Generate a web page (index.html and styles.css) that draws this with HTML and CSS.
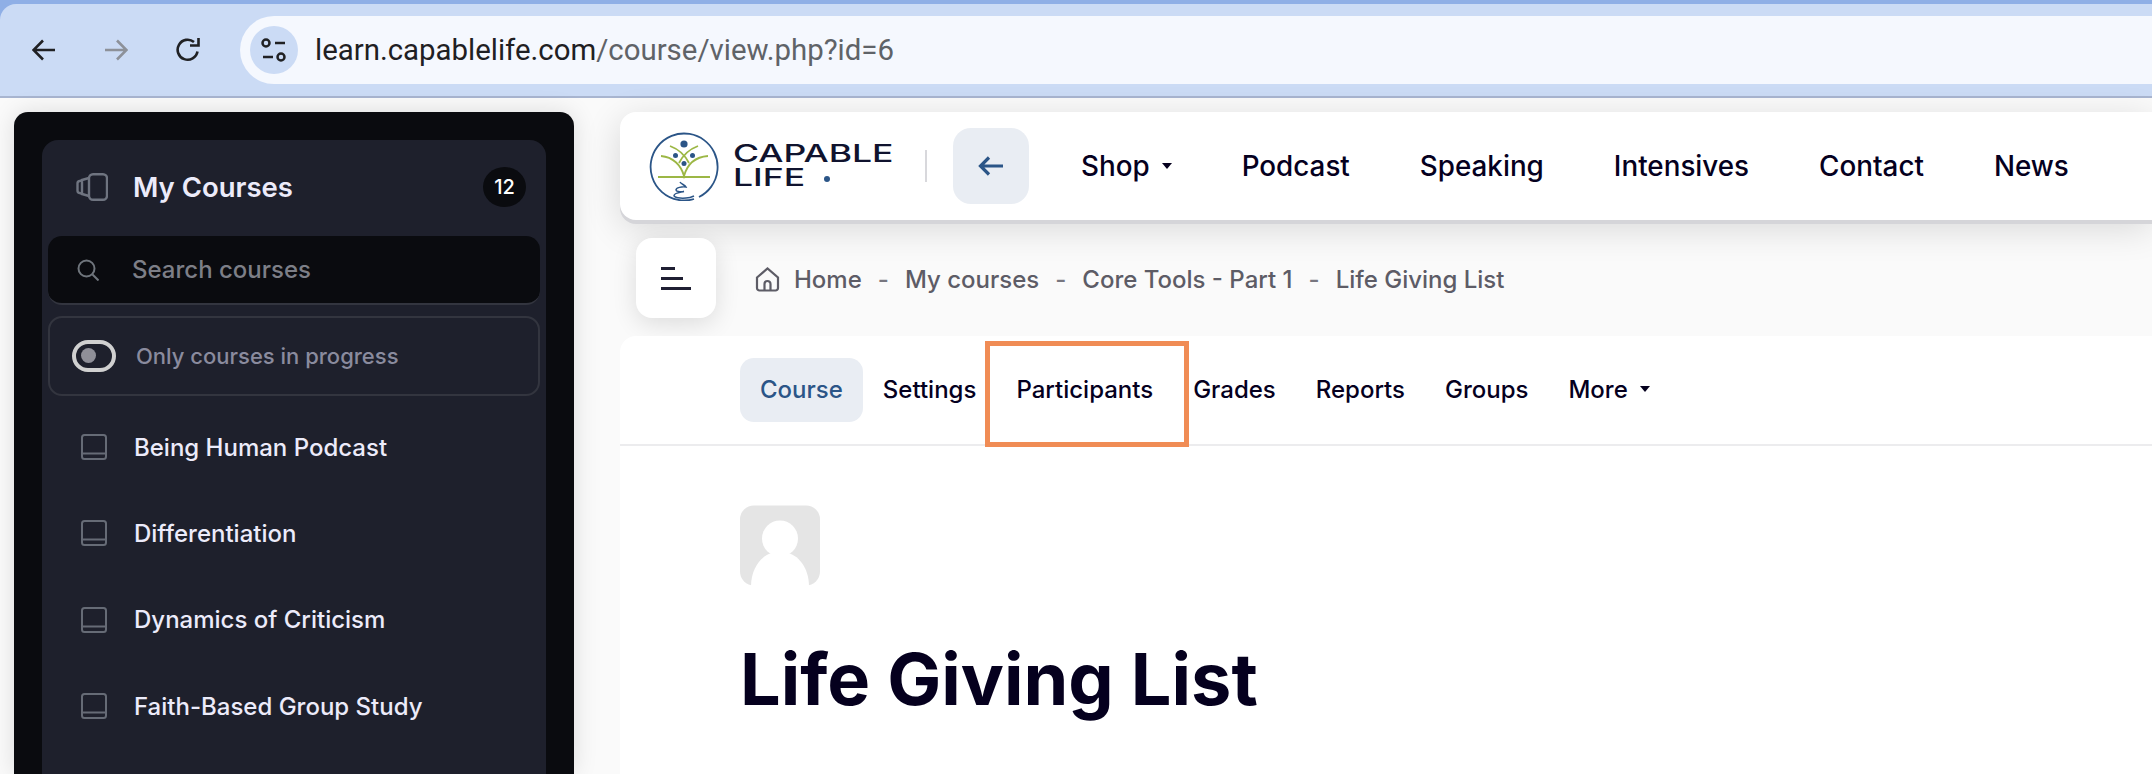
FILE: index.html
```html
<!DOCTYPE html>
<html lang="en">
<head>
    <meta charset="UTF-8">
    <meta name="viewport" content="width=device-width, initial-scale=1.0">
    <title>Life Giving List</title>
    <link rel="stylesheet" href="styles.css">
</head>
<body>
    <div class="browser-bar">
        <div class="toolbar">
            <svg class="tool-icon" viewBox="0 0 24 24"><path d="M23 12H2M11 2.500 1.500 12l9.500 9.500" fill="none" stroke="#202124" stroke-width="2.600"/></svg>
            <svg class="tool-icon" viewBox="0 0 24 24"><path d="M1 12h21M13 2.500 22.500 12 13 21.500" fill="none" stroke="#8d9199" stroke-width="2.600"/></svg>
            <svg class="tool-icon" viewBox="0 0 24 24"><path d="M21.500 13.500A10 10 0 1 1 18 4" fill="none" stroke="#202124" stroke-width="2.600"/><path d="M14 7.500h8.500V0" fill="none" stroke="#202124" stroke-width="2.600"/></svg>
            <div class="address-bar">
                <span class="site-icon">
                    <svg viewBox="0 0 48 48" width="48" height="48"><circle cx="16" cy="17" r="3.500" fill="none" stroke="#202124" stroke-width="2.500"/><path d="M25 17h10M13 31h10" stroke="#202124" stroke-width="2.500"/><circle cx="31" cy="31" r="3.500" fill="none" stroke="#202124" stroke-width="2.500"/></svg>
                </span>
                <span class="url">learn.capablelife.com<span class="url-path">/course/view.php?id=6</span></span>
            </div>
        </div>
    </div>

    <div class="page">
        <aside class="sidebar">
            <div class="sidebar-inner">
                <div class="courses-head">
                    <svg class="courses-icon" viewBox="0 0 32 28"><rect x="13" y="1.200" width="18" height="25.600" rx="4" fill="none" stroke="#6f7480" stroke-width="2.400"/><path d="M13 5 6 7v14l7 2M6 7 3.500 8A2.500 2.500 0 0 0 1.500 10.500v7A2.500 2.500 0 0 0 3.500 20L6 21" fill="none" stroke="#6f7480" stroke-width="2.400"/></svg>
                    <span class="courses-title">My Courses</span>
                    <span class="courses-count">12</span>
                </div>
                <div class="search-box">
                    <svg class="search-icon" viewBox="0 0 22 22"><circle cx="9.500" cy="9.500" r="8" fill="none" stroke="#6f757c" stroke-width="2"/><path d="m15.500 15.500 6 6" stroke="#6f757c" stroke-width="2"/></svg>
                    <span>Search courses</span>
                </div>
                <div class="progress-filter">
                    <span class="toggle"><span class="toggle-dot"></span></span>
                    <span>Only courses in progress</span>
                </div>
                <ul class="course-list">
                    <li class="course-item">
                        <svg class="book-icon" viewBox="0 0 26 26"><rect x="1" y="1" width="24" height="24" rx="2.500" fill="none" stroke="#666b76" stroke-width="2"/><path d="M1 19.500h24" stroke="#666b76" stroke-width="2"/></svg>
                        Being Human Podcast
                    </li>
                    <li class="course-item">
                        <svg class="book-icon" viewBox="0 0 26 26"><rect x="1" y="1" width="24" height="24" rx="2.500" fill="none" stroke="#666b76" stroke-width="2"/><path d="M1 19.500h24" stroke="#666b76" stroke-width="2"/></svg>
                        Differentiation
                    </li>
                    <li class="course-item">
                        <svg class="book-icon" viewBox="0 0 26 26"><rect x="1" y="1" width="24" height="24" rx="2.500" fill="none" stroke="#666b76" stroke-width="2"/><path d="M1 19.500h24" stroke="#666b76" stroke-width="2"/></svg>
                        Dynamics of Criticism
                    </li>
                    <li class="course-item">
                        <svg class="book-icon" viewBox="0 0 26 26"><rect x="1" y="1" width="24" height="24" rx="2.500" fill="none" stroke="#666b76" stroke-width="2"/><path d="M1 19.500h24" stroke="#666b76" stroke-width="2"/></svg>
                        Faith-Based Group Study
                    </li>
                </ul>
            </div>
        </aside>

        <main class="content">
            <header class="site-header">
                <svg class="logo-mark" viewBox="0 0 70 70">
                    <path d="M50 66A33.500 33.500 0 1 0 45 68" fill="none" stroke="#2b5587" stroke-width="1.800"/>
                    <circle cx="35" cy="13" r="3.600" fill="#2b5587"/>
                    <circle cx="26.500" cy="24.500" r="2.500" fill="#2b5587"/>
                    <circle cx="43.500" cy="24.500" r="2.500" fill="#2b5587"/>
                    <circle cx="35" cy="32.500" r="2.500" fill="#2b5587"/>
                    <path d="M9 46h52" stroke="#9cb745" stroke-width="2"/>
                    <path d="M12 25C24 26 32 34 35 45 38 34 46 26 59 25M21 15C29 18 36 24 40 32M49 15C41 18 34 24 30 32" fill="none" stroke="#9cb745" stroke-width="1.800"/>
                    <path d="M31 51c1 2 5 3 6 5-4-.5-10 .5-10 3 0 1.500 4 2 8 1.500-4 1-10 1.500-10 4 0 2 6 3 12 2.500 3 0 6-1 8-2" fill="none" stroke="#2b5587" stroke-width="1.500"/>
                </svg>
                <div class="logo-text">
                    <span class="logo-line">CAPABLE</span>
                    <span class="logo-line">LIFE</span>
                </div>
                <span class="logo-dot"></span>
                <span class="header-divider"></span>
                <span class="back-button">
                    <svg viewBox="0 0 26 20" width="26" height="20"><path d="M25 10H3M11 1.500 2.500 10l8.500 8.500" fill="none" stroke="#2b5587" stroke-width="3.200"/></svg>
                </span>
                <nav class="main-nav">
                    <a class="caret-link">Shop<span class="caret"></span></a>
                    <a>Podcast</a>
                    <a>Speaking</a>
                    <a>Intensives</a>
                    <a>Contact</a>
                    <a>News</a>
                </nav>
            </header>

            <div class="crumb-row">
                <span class="menu-button">
                    <svg viewBox="0 0 30 24" width="30" height="24"><path d="M0 2.500h14M0 12.500h22M0 22.500h30" stroke="#1f1f33" stroke-width="3"/></svg>
                </span>
                <div class="breadcrumb">
                    <svg class="home-icon" viewBox="0 0 25 25"><path d="M2 10.500 12.500 1.500 23 10.500V21a2.500 2.500 0 0 1-2.500 2.500h-16A2.500 2.500 0 0 1 2 21Z" fill="none" stroke="#5d5c66" stroke-width="2.200"/><path d="M9.500 23.500V17a3 3 0 0 1 6 0v6.500" fill="none" stroke="#5d5c66" stroke-width="2.200"/></svg>
                    <span>Home</span>
                    <span class="crumb-sep">-</span>
                    <span>My courses</span>
                    <span class="crumb-sep">-</span>
                    <span>Core Tools - Part 1</span>
                    <span class="crumb-sep">-</span>
                    <span>Life Giving List</span>
                </div>
            </div>

            <section class="course-card">
                <nav class="tabs">
                    <a class="tab tab-active">Course</a>
                    <a class="tab">Settings</a>
                    <a class="tab">Participants</a>
                    <a class="tab">Grades</a>
                    <a class="tab">Reports</a>
                    <a class="tab">Groups</a>
                    <a class="tab caret-link">More<span class="caret"></span></a>
                    <span class="highlight-box"></span>
                </nav>
                <div class="course-body">
                    <svg class="avatar" viewBox="0 0 80 80">
                        <rect width="80" height="80" rx="14" fill="#e5e5e5"/>
                        <ellipse cx="40" cy="33" rx="18" ry="18" fill="#fff"/>
                        <path d="M11 81C11 62 22 49 34 47H46C58 49 69 62 69 81Z" fill="#fff"/>
                    </svg>
                    <h1 class="course-title">Life Giving List</h1>
                </div>
            </section>
        </main>
    </div>
</body>
</html>
```

FILE: styles.css
```css
* {
    box-sizing: border-box;
}

html, body {
    height: 100%;
}

body {
    margin: 0;
    overflow: hidden;
    display: flex;
    flex-direction: column;
    font-family: Inter, "Liberation Sans", sans-serif;
    background-color: #fafafa;
}

/* browser chrome */
.browser-bar {
    flex: none;
    height: 98px;
    padding-top: 4px;
    background-color: #8fafe6;
}

.toolbar {
    height: 94px;
    display: flex;
    align-items: center;
    padding-left: 32px;
    gap: 48px;
    background-color: #cbdbf5;
    border-top-left-radius: 16px;
    border-bottom: 2px solid #a8b5d0;
}

.tool-icon {
    width: 24px;
    height: 24px;
    flex: none;
}

.address-bar {
    flex: 1;
    height: 68px;
    margin-left: -8px;
    padding-left: 10px;
    display: flex;
    align-items: center;
    gap: 17px;
    background-color: #f5f8fe;
    border-radius: 34px 0 0 34px;
}

.site-icon {
    width: 48px;
    height: 48px;
    border-radius: 50%;
    background-color: #cbdbf5;
}

.url {
    font-family: Roboto, sans-serif;
    font-size: 29.400px;
    color: #1f2023;
}

.url-path {
    color: #5f6368;
}

/* page */
.page {
    flex: 1;
    min-height: 0;
    display: flex;
    padding: 14px 0 0 14px;
    gap: 46px;
}

.sidebar {
    flex: none;
    width: 560px;
    padding: 28px 28px 0;
    background-color: #0a0b0f;
    border-radius: 14px 14px 0 0;
    box-shadow: 0 0 24px rgba(0, 0, 0, 0.12);
}

.sidebar-inner {
    height: 100%;
    padding: 0 6px;
    background-color: #1e202c;
    border-radius: 16px 16px 0 0;
}

.courses-head {
    height: 96px;
    display: flex;
    align-items: center;
    padding: 0 14px 2px 28px;
}

.courses-icon {
    width: 32px;
    height: 28px;
    flex: none;
    margin-right: 25px;
}

.courses-title {
    flex: 1;
    font-size: 27.500px;
    font-weight: 600;
    color: #ecebfa;
}

.courses-count {
    width: 43px;
    height: 40px;
    display: flex;
    align-items: center;
    justify-content: center;
    font-size: 20px;
    font-weight: 500;
    color: #fff;
    background-color: #0a0b0f;
    border-radius: 50%;
}

.search-box {
    height: 69px;
    display: flex;
    align-items: center;
    padding-left: 29px;
    gap: 33px;
    font-size: 24px;
    font-weight: 500;
    color: #7d7f87;
    background-color: #0a0b0f;
    border-bottom: 2px solid #33353f;
    border-radius: 14px;
}

.search-icon {
    width: 22px;
    height: 22px;
    flex: none;
}

.progress-filter {
    height: 80px;
    margin-top: 11px;
    display: flex;
    align-items: center;
    padding: 0 0 1px 22px;
    gap: 20px;
    font-size: 22px;
    font-weight: 500;
    color: #8a8b9e;
    border: 2px solid #33353f;
    border-radius: 14px;
}

.toggle {
    width: 44px;
    height: 32px;
    padding-left: 5px;
    display: flex;
    align-items: center;
    border: 4px solid #d0d0d0;
    border-radius: 16px;
}

.toggle-dot {
    width: 15px;
    height: 15px;
    background-color: #8f8f98;
    border-radius: 50%;
}

.course-list {
    margin: 8px 0 0;
    padding: 0;
    list-style: none;
}

.course-item {
    height: 86.300px;
    display: flex;
    align-items: center;
    padding-left: 33px;
    gap: 27px;
    font-size: 24px;
    font-weight: 500;
    color: #ecebfa;
}

.book-icon {
    width: 26px;
    height: 26px;
    flex: none;
}

/* main column */
.content {
    flex: 1;
    min-width: 0;
    display: flex;
    flex-direction: column;
}

.site-header {
    flex: none;
    height: 108px;
    display: flex;
    align-items: center;
    padding-left: 29px;
    background-color: #fff;
    border-radius: 16px 0 0 16px;
    box-shadow: 0 4px 0 #d5d5d9, 0 8px 36px rgba(0, 0, 0, 0.14);
}

.logo-mark {
    width: 70px;
    height: 70px;
    flex: none;
    margin-right: 14px;
}

.logo-text {
    width: 86px;
    display: flex;
    flex-direction: column;
    font-size: 24px;
    line-height: 24px;
    font-weight: 500;
    color: #10132e;
}

.logo-line {
    transform: scaleX(1.480);
    transform-origin: left;
}

.logo-dot {
    width: 6px;
    height: 6px;
    margin: 26px 0 0 5px;
    background-color: #2b5587;
    border-radius: 50%;
}

.header-divider {
    width: 2px;
    height: 32px;
    margin-left: 95px;
    background-color: #d8d8dc;
}

.back-button {
    width: 76px;
    height: 76px;
    margin-left: 26px;
    display: flex;
    align-items: center;
    justify-content: center;
    background-color: #e9edf3;
    border-radius: 18px;
}

.main-nav {
    display: flex;
    align-items: center;
    margin-left: 52px;
    gap: 70px;
    font-size: 27.800px;
    font-weight: 500;
    color: #05001e;
}

.caret-link {
    display: flex;
    align-items: center;
}

.caret {
    width: 0;
    height: 0;
    margin-left: 12px;
    border: 5px solid transparent;
    border-top: 6px solid #05001e;
    border-bottom: 0;
}

.crumb-row {
    flex: none;
    display: flex;
    align-items: center;
    margin-top: 18px;
    padding-left: 16px;
    gap: 39px;
}

.menu-button {
    width: 80px;
    height: 80px;
    display: flex;
    align-items: center;
    justify-content: center;
    background-color: #fff;
    border-radius: 16px;
    box-shadow: 0 6px 24px rgba(0, 0, 0, 0.12);
}

.breadcrumb {
    display: flex;
    align-items: center;
    padding-top: 2px;
    gap: 16px;
    font-size: 24px;
    font-weight: 500;
    color: #5d5c66;
}

.home-icon {
    width: 25px;
    height: 25px;
    flex: none;
    margin-right: -2px;
}

.crumb-sep {
    color: #77767f;
}

.course-card {
    flex: 1;
    margin-top: 18px;
    background-color: #fff;
    border-top-left-radius: 16px;
}

.tabs {
    position: relative;
    height: 110px;
    display: flex;
    align-items: center;
    padding-left: 120px;
    border-bottom: 2px solid #ececee;
    font-size: 24px;
    font-weight: 500;
    color: #05001e;
}

.tab {
    height: 64px;
    display: flex;
    align-items: center;
    padding: 0 20px 2px;
    border-radius: 14px;
}

.tab-active {
    color: #2b5587;
    background-color: #e9edf3;
}

.highlight-box {
    position: absolute;
    left: 365px;
    top: 5px;
    width: 204px;
    height: 106px;
    border: 5px solid #f08c55;
}

.course-body {
    padding: 59px 0 0 120px;
}

.avatar {
    display: block;
    width: 80px;
    height: 81px;
}

.course-title {
    margin: 50px 0 0;
    font-size: 72px;
    line-height: 1.200;
    font-weight: 700;
    color: #05001e;
}
```
